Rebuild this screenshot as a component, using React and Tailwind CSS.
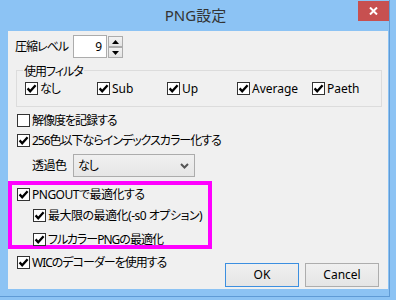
import React from "react";

function Check({ checked }) {
  return (
    <span className="flex h-[13px] w-[13px] shrink-0 items-center justify-center border border-[#333333] bg-white">
      {checked && (
        <svg width="11" height="11" viewBox="0 0 11 11">
          <path d="M1.6 5.4 L4.2 8.2 L9.6 2.2" fill="none" stroke="#000" strokeWidth="2.3" />
        </svg>
      )}
    </span>
  );
}

function CheckRow({ checked = true, label, className = "", textClass = "" }) {
  return (
    <div className={"flex h-[13px] items-center gap-[2px] whitespace-nowrap " + className}>
      <Check checked={checked} />
      <span className={"leading-[13px] " + textClass}>{label}</span>
    </div>
  );
}

function Spin({ up }) {
  return (
    <div className="flex h-[11px] w-[15px] items-center justify-center border border-[#acacac] bg-gradient-to-b from-[#f2f2f2] to-[#e3e3e3]">
      <svg width="7" height="4" viewBox="0 0 7 4">
        {up ? <path d="M0 4 L3.5 0 L7 4 Z" fill="#000" /> : <path d="M0 0 L3.5 4 L7 0 Z" fill="#000" />}
      </svg>
    </div>
  );
}

function Button({ children, primary }) {
  return (
    <div
      className={
        "flex h-[24px] w-[74px] items-center justify-center border bg-gradient-to-b from-[#f0f0f0] to-[#e5e5e5] " +
        (primary ? "border-[#3c8fe0]" : "border-[#adadad]")
      }
    >
      {children}
    </div>
  );
}

export default function App() {
  return (
    <div className="h-[300px] w-[396px] bg-[#8cc3f4] font-['Noto_Sans','Noto_Sans_CJK_JP',sans-serif] text-[12px] text-black [font-feature-settings:'palt']">
      <div className="flex h-[297px] w-[390px] flex-col border-r border-b border-[#5f9bd6]">
        {/* title bar */}
        <div className="relative flex h-[31px] items-center justify-center">
          <span className="pl-[2px] text-[15px] text-[#333333]">PNG設定</span>
          <div className="absolute right-0 top-[1px] flex h-[20px] w-[31px] items-center justify-center bg-[#c75050]">
            <svg width="9" height="8" viewBox="0 0 9 8">
              <path d="M1 0.5 L8 7.5 M8 0.5 L1 7.5" stroke="#fff" strokeWidth="2" />
            </svg>
          </div>
        </div>

        {/* client */}
        <div className="ml-[8px] flex h-[258px] w-[380px] flex-col bg-[#f0f0f0]">
          <div className="mt-[4px] flex h-[23px] items-center">
            <span className="ml-[7px] w-[58px] whitespace-nowrap tracking-[-1px]">圧縮レベル</span>
            <div className="flex h-[23px] w-[34px] items-center justify-end border border-[#acacac] bg-white pr-[4px]">9</div>
            <div className="ml-[1px] mt-[1px] flex flex-col self-start">
              <Spin up />
              <Spin />
            </div>
          </div>

          <fieldset className="ml-[8px] mt-[2px] w-[366px] border border-[#dcdcdc] pb-[10px]">
            <legend className="ml-[6px] px-[1px] pt-[4px] leading-[16px] tracking-[-1px]">使用フィルタ</legend>
            <div className="flex h-[16px] items-center pl-[8px]">
              <CheckRow label="なし" className="w-[72px]" textClass="tracking-[-1px]" />
              <CheckRow label="Sub" className="w-[70px]" />
              <CheckRow label="Up" className="w-[70px]" />
              <CheckRow label="Average" className="w-[75px]" />
              <CheckRow label="Paeth" />
            </div>
          </fieldset>

          <CheckRow checked={false} label="解像度を記録する" className="ml-[9px] mt-[7px]" textClass="tracking-[-1px]" />
          <CheckRow label="256色以下ならインデックスカラー化する" className="ml-[9px] mt-[7px]" textClass="tracking-[-1px]" />

          <div className="mt-[7px] flex h-[23px] items-center">
            <span className="ml-[24px] w-[41px] tracking-[-0.5px]">透過色</span>
            <div className="flex h-[23px] w-[122px] items-center justify-between border border-[#acacac] bg-gradient-to-b from-[#f0f0f0] to-[#e6e6e6] pl-[4px] pr-[5px]">
              <span className="tracking-[-1px]">なし</span>
              <svg width="9" height="6" viewBox="0 0 9 6">
                <path d="M1 1 L4.5 4.5 L8 1" fill="none" stroke="#555" strokeWidth="2" />
              </svg>
            </div>
          </div>

          <div className="mt-[4px] flex h-[68px] w-[204px] flex-col border-4 border-[#ff00ff]">
            <CheckRow label="PNGOUTで最適化する" className="ml-[5px] mt-[3px]" textClass="tracking-[-0.5px]" />
            <CheckRow label="最大限の最適化(-s0 オプション)" className="ml-[21px] mt-[8px]" textClass="tracking-[-0.5px]" />
            <CheckRow label="フルカラーPNGの最適化" className="ml-[21px] mt-[11px]" textClass="tracking-[-1px]" />
          </div>

          <div className="flex items-start justify-between">
            <CheckRow label="WICのデコーダーを使用する" className="ml-[9px] mt-[7px]" textClass="tracking-[-1px]" />
            <div className="mr-[9px] mt-[14px] flex gap-[6px]">
              <Button primary>OK</Button>
              <Button>Cancel</Button>
            </div>
          </div>
        </div>
      </div>
    </div>
  );
}
